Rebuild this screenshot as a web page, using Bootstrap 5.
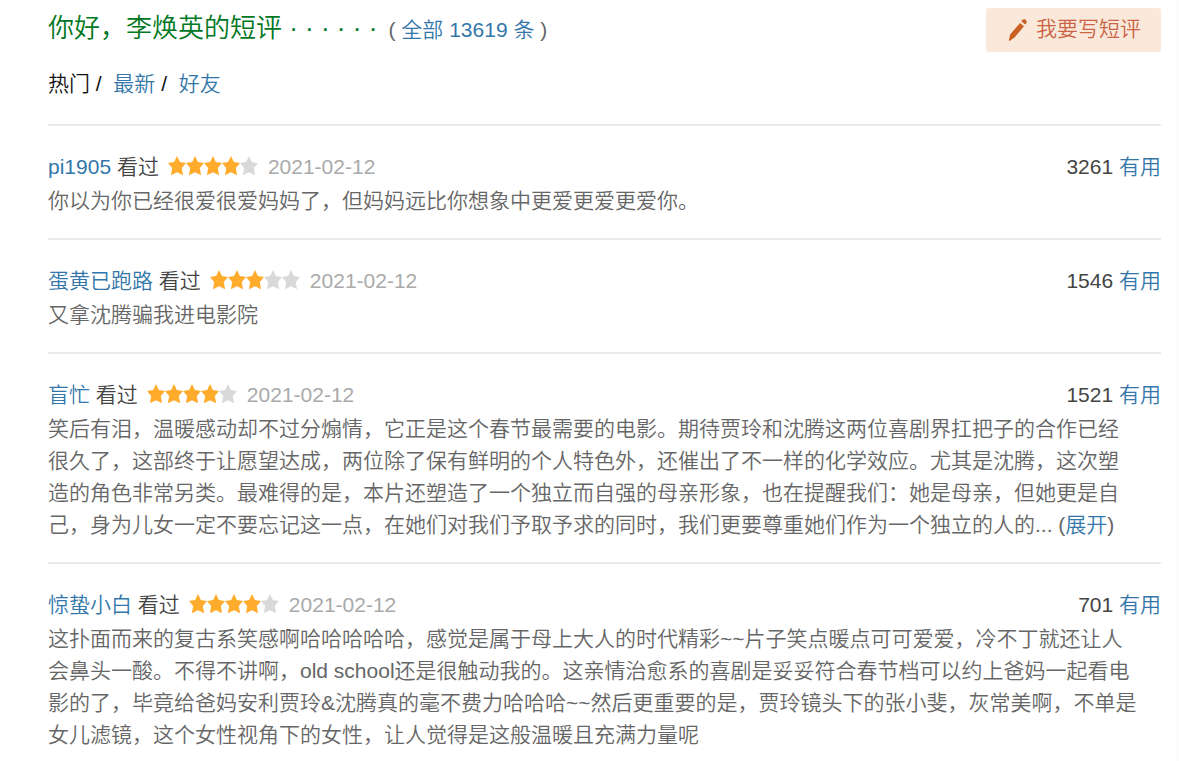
<!DOCTYPE html>
<html lang="zh-CN">
<head>
<meta charset="utf-8">
<meta name="viewport" content="width=device-width, initial-scale=1">
<title>你好，李焕英的短评</title>
<link rel="stylesheet" href="https://cdn.jsdelivr.net/npm/bootstrap@5.3.0/dist/css/bootstrap.min.css">
<style>
  body { background: #fcfcfc; color: #666; font-family: "Liberation Sans", "Noto Sans CJK SC", sans-serif; font-size: 21px; font-weight: 350; line-height: 32px; }
  a { color: #37a; text-decoration: none; }
  a:hover { text-decoration: underline; }
  .comments { background: #fff; margin-right: 3px; padding: 8px 15px 8px 48px; }
  .title { color: #007722; font-size: 26px; font-weight: 350; line-height: 40px; }
  .total { color: #666; font-size: 21px; margin-left: 4px; }
  .write { width: 175px; height: 44px; padding: 0 20px 2px 22px; border: 0; border-radius: 3px; background: #fae9da; color: #ca6445; font-size: 21px; font-weight: 350; line-height: 42px; }
  .tabs { margin: 16px 0 24px; color: #111; }
  .review { border-top: 2px solid #eaeaea; padding: 25px 0 21px; }
  .review p { margin: 2px 0 0; }
  .who { color: #444; }
  .date { color: #aaa; }
  .stars { width: 90px; height: 20px; margin: 0 10px 2px 9px; fill: #ffac2d; }
  .stars .off { fill: #d9d9d9; }
</style>
</head>
<body>
<svg class="d-none" aria-hidden="true">
  <symbol id="star" viewBox="0 0 18 20"><path d="M9 0l2.900 6.100 6.100.8-4.200 5 1.300 7.300L9 16.300 2.900 19.200l1.300-7.300L0 6.900l6.100-.8z"/></symbol>
</svg>
<main class="comments">
  <header class="d-flex justify-content-between align-items-start">
    <h2 class="title mb-0">你好，李焕英的短评&nbsp;·&nbsp;·&nbsp;·&nbsp;·&nbsp;·&nbsp;· <span class="total">( <a href="#all">全部 13619 条</a> )</span></h2>
    <button type="button" class="write btn d-flex align-items-center justify-content-between">
      <svg width="20" height="24" viewBox="0 0 20 24" fill="#ca5f22" aria-hidden="true"><path d="M12 6l4 3.200L6.500 20.500 1.600 24 .8 23.300 2.200 17.500z"/><path d="M13.300 4.300C14.300 2.300 16 1.700 17.600 2.700c1.600 1.300 1.500 3-.5 4.700z"/></svg>
      <span>我要写短评</span>
    </button>
  </header>
  <nav class="tabs" aria-label="排序">热门 / &nbsp;<a href="#new">最新</a> / &nbsp;<a href="#friends">好友</a></nav>

  <article class="review">
    <div class="who d-flex justify-content-between">
      <div class="d-flex align-items-center"><span><a href="#u1">pi1905</a> 看过</span>
        <svg class="stars" viewBox="0 0 90 20" role="img" aria-label="4 星"><use href="#star" width="18" height="20"/><use href="#star" x="18" width="18" height="20"/><use href="#star" x="36" width="18" height="20"/><use href="#star" x="54" width="18" height="20"/><use class="off" href="#star" x="72" width="18" height="20"/></svg>
        <span class="date">2021-02-12</span></div>
      <div>3261 <a href="#v1">有用</a></div>
    </div>
    <p>你以为你已经很爱很爱妈妈了，但妈妈远比你想象中更爱更爱更爱你。</p>
  </article>

  <article class="review">
    <div class="who d-flex justify-content-between">
      <div class="d-flex align-items-center"><span><a href="#u2">蛋黄已跑路</a> 看过</span>
        <svg class="stars" viewBox="0 0 90 20" role="img" aria-label="3 星"><use href="#star" width="18" height="20"/><use href="#star" x="18" width="18" height="20"/><use href="#star" x="36" width="18" height="20"/><use class="off" href="#star" x="54" width="18" height="20"/><use class="off" href="#star" x="72" width="18" height="20"/></svg>
        <span class="date">2021-02-12</span></div>
      <div>1546 <a href="#v2">有用</a></div>
    </div>
    <p>又拿沈腾骗我进电影院</p>
  </article>

  <article class="review">
    <div class="who d-flex justify-content-between">
      <div class="d-flex align-items-center"><span><a href="#u3">盲忙</a> 看过</span>
        <svg class="stars" viewBox="0 0 90 20" role="img" aria-label="4 星"><use href="#star" width="18" height="20"/><use href="#star" x="18" width="18" height="20"/><use href="#star" x="36" width="18" height="20"/><use href="#star" x="54" width="18" height="20"/><use class="off" href="#star" x="72" width="18" height="20"/></svg>
        <span class="date">2021-02-12</span></div>
      <div>1521 <a href="#v3">有用</a></div>
    </div>
    <p>笑后有泪，温暖感动却不过分煽情，它正是这个春节最需要的电影。期待贾玲和沈腾这两位喜剧界扛把子的合作已经<br>很久了，这部终于让愿望达成，两位除了保有鲜明的个人特色外，还催出了不一样的化学效应。尤其是沈腾，这次塑<br>造的角色非常另类。最难得的是，本片还塑造了一个独立而自强的母亲形象，也在提醒我们：她是母亲，但她更是自<br>己，身为儿女一定不要忘记这一点，在她们对我们予取予求的同时，我们更要尊重她们作为一个独立的人的... (<a href="#more">展开</a>)</p>
  </article>

  <article class="review">
    <div class="who d-flex justify-content-between">
      <div class="d-flex align-items-center"><span><a href="#u4">惊蛰小白</a> 看过</span>
        <svg class="stars" viewBox="0 0 90 20" role="img" aria-label="4 星"><use href="#star" width="18" height="20"/><use href="#star" x="18" width="18" height="20"/><use href="#star" x="36" width="18" height="20"/><use href="#star" x="54" width="18" height="20"/><use class="off" href="#star" x="72" width="18" height="20"/></svg>
        <span class="date">2021-02-12</span></div>
      <div>701 <a href="#v4">有用</a></div>
    </div>
    <p>这扑面而来的复古系笑感啊哈哈哈哈哈，感觉是属于母上大人的时代精彩~~片子笑点暖点可可爱爱，冷不丁就还让人<br>会鼻头一酸。不得不讲啊，old school还是很触动我的。这亲情治愈系的喜剧是妥妥符合春节档可以约上爸妈一起看电<br>影的了，毕竟给爸妈安利贾玲&amp;沈腾真的毫不费力哈哈哈~~然后更重要的是，贾玲镜头下的张小斐，灰常美啊，不单是<br>女儿滤镜，这个女性视角下的女性，让人觉得是这般温暖且充满力量呢</p>
  </article>
</main>
<script src="https://cdn.jsdelivr.net/npm/bootstrap@5.3.0/dist/js/bootstrap.bundle.min.js"></script>
</body>
</html>
